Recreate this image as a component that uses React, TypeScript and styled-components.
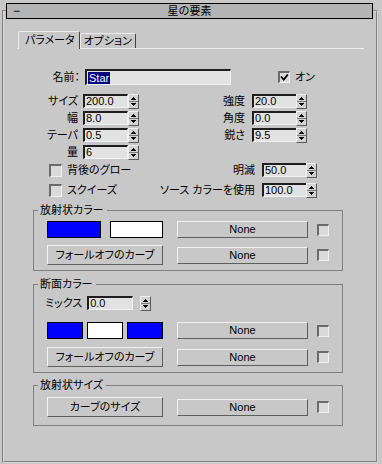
import React from "react";
import styled, { createGlobalStyle } from "styled-components";

const GlobalStyle = createGlobalStyle`
  * { box-sizing: border-box; }
  html, body { margin: 0; padding: 0; background: #c8c8c8; }
  body {
    width: 382px;
    height: 464px;
    overflow: hidden;
    font-family: "Liberation Sans", "Noto Sans CJK JP", sans-serif;
    font-size: 11px;
    color: #000;
    font-feature-settings: "palt";
  }
`;

const Rollout = styled.fieldset`
  margin: 3px 0 0 2px;
  padding: 0;
  width: 376px;
  height: 460px;
  min-width: 0;
  border: 2px groove #d6d6d6;
`;

const Header = styled.legend`
  margin-left: 2px;
  padding: 0;
  width: 367px;
  height: 16px;
  background: #b4b4b4;
  border: 1px solid #000;
`;

const HeaderInner = styled.div`
  display: grid;
  grid-template-columns: 1fr auto 1fr;
  align-items: center;
  height: 14px;
  line-height: 14px;
`;

const Collapse = styled.span`
  justify-self: start;
  padding-left: 6px;
  font-size: 12px;
`;

const Title = styled.span`
  font-size: 11px;
  font-feature-settings: normal;
`;

const Content = styled.div`
  display: flex;
  flex-direction: column;
  align-items: flex-start;
`;

const TabStrip = styled.div`
  display: flex;
  align-items: flex-end;
  margin: 12px 0 0 13px;
  width: 347px;
  height: 18px;
  padding-left: 1px;
  border-bottom: 1px solid #ececec;
`;

const Tab = styled.div<{ $active?: boolean }>`
  position: relative;
  height: ${(p) => (p.$active ? 18 : 15)}px;
  margin-bottom: ${(p) => (p.$active ? -1 : 0)}px;
  padding: ${(p) => (p.$active ? "1px 4px 0 6px" : "0 3px 0 3px")};
  background: #c8c8c8;
  border-style: solid;
  border-width: 1px 1px 0 1px;
  border-color: #ececec #404040 transparent #ececec;
  border-radius: 2px 2px 0 0;
  line-height: 14px;
  white-space: nowrap;
`;

const NameRow = styled.div`
  display: flex;
  align-items: center;
  margin-top: 20px;
  height: 16px;
`;

const NameLabel = styled.span`
  width: 76px;
  margin-right: 5px;
  text-align: right;
  line-height: 14px;
`;

const Sunken = styled.div<{ $w: number; $h: number }>`
  width: ${(p) => p.$w}px;
  height: ${(p) => p.$h}px;
  background: #e2e2e2;
  border-style: solid;
  border-width: 2px 1px 1px 2px;
  border-color: #1e1e1e #f2f2f2 #f2f2f2 #1e1e1e;
  font-size: 11px;
  line-height: ${(p) => p.$h - 3}px;
  padding-left: 1px;
  white-space: nowrap;
  overflow: hidden;
`;

const Selected = styled.span`
  display: inline-block;
  background: #000080;
  color: #fff;
  padding: 0 1px;
  line-height: 12px;
  margin-top: 1px;
`;

const CheckLabel = styled.label<{ $ml?: number }>`
  display: flex;
  align-items: center;
  gap: 5px;
  margin-left: ${(p) => p.$ml ?? 0}px;
  line-height: 14px;
  white-space: nowrap;
`;

const Box = styled.span<{ $size: number }>`
  display: inline-flex;
  align-items: center;
  justify-content: center;
  width: ${(p) => p.$size}px;
  height: ${(p) => p.$size}px;
  background: #dadada;
  border-style: solid;
  border-width: 2px 1px 1px 2px;
  border-color: #6a6a6a #f0f0f0 #f0f0f0 #6a6a6a;
  flex: none;
`;

const SpinBlock = styled.div<{ $mt: number }>`
  display: flex;
  margin-top: ${(p) => p.$mt}px;
`;

const SpinColumn = styled.div<{ $label: number; $g1: number; $g2: number; $rowGap: number; $ml?: number }>`
  display: grid;
  grid-template-columns: ${(p) => p.$label}px 45px 11px;
  grid-auto-rows: 14px;
  row-gap: ${(p) => p.$rowGap}px;
  align-items: center;
  margin-left: ${(p) => p.$ml ?? 0}px;
  & > :nth-child(3n + 2) { margin-left: ${(p) => p.$g1}px; }
  & > :nth-child(3n) { margin-left: ${(p) => p.$g2}px; }
`;

const CheckColumn = styled.div<{ $rowGap: number }>`
  display: grid;
  grid-auto-rows: 14px;
  row-gap: ${(p) => p.$rowGap}px;
  align-items: center;
  width: 140px;
  padding-left: 45px;
`;

const SpinLabel = styled.span`
  justify-self: end;
  line-height: 14px;
  white-space: nowrap;
`;

const SpinnerBox = styled.span`
  display: block;
  width: 11px;
  height: 15px;
  background: #d2d2d2;
  border-style: solid;
  border-width: 1px;
  border-color: #f0f0f0 #5a5a5a #5a5a5a #f0f0f0;
  align-self: center;
  & svg { display: block; }
`;

const Spinner = () => (
  <SpinnerBox>
    <svg width="9" height="13" viewBox="0 0 9 13" shapeRendering="crispEdges">
      <path d="M2 5h5v-1h-1v-1h-1v-1h-1v1h-1v1h-1z" fill="#000" />
      <rect x="0" y="6" width="9" height="1" fill="#7a7a7a" />
      <path d="M2 8h5v1h-1v1h-1v1h-1v-1h-1v-1h-1z" fill="#000" />
    </svg>
  </SpinnerBox>
);

const Group = styled.fieldset<{ $mt: number; $pt: number; $pb: number }>`
  margin: ${(p) => p.$mt}px 0 0 29px;
  width: 310px;
  min-width: 0;
  padding: ${(p) => p.$pt}px 12px ${(p) => p.$pb}px 13px;
  border: 1px solid #808080;
  display: flex;
  flex-direction: column;
`;

const GroupLegend = styled.legend`
  margin-left: -9px;
  padding: 0 3px 0 2px;
  line-height: 14px;
`;

const GroupRow = styled.div<{ $h: number; $mt?: number }>`
  display: flex;
  align-items: center;
  height: ${(p) => p.$h}px;
  margin-top: ${(p) => p.$mt ?? 0}px;
`;

const Swatches = styled.div<{ $gap: number }>`
  display: flex;
  gap: ${(p) => p.$gap}px;
  width: 116px;
  height: 17px;
`;

const Swatch = styled.span<{ $color: string }>`
  flex: 1;
  background: ${(p) => p.$color};
  border: 1px solid #000;
`;

const Raised = styled.button<{ $w: number; $h: number; $ml?: number }>`
  width: ${(p) => p.$w}px;
  height: ${(p) => p.$h}px;
  margin: 0 0 0 ${(p) => p.$ml ?? 0}px;
  padding: 0;
  background: #c8c8c8;
  border-style: solid;
  border-width: 1px;
  border-color: #f2f2f2 #5e5e5e #5e5e5e #f2f2f2;
  font-family: "Liberation Sans", "Noto Sans CJK JP", sans-serif;
  font-feature-settings: "palt";
  font-size: 11px;
  color: #000;
  line-height: ${(p) => p.$h - 2}px;
  white-space: nowrap;
`;

const GroupCheck = styled(Box)`
  margin-left: 9px;
`;

const MixLabel = styled.span`
  margin: 0 5px 0 -2px;
  line-height: 14px;
  white-space: nowrap;
`;

const MixSpinner = styled.span`
  margin-left: 7px;
  display: flex;
`;

const CheckMark = () => (
  <svg width="9" height="9" viewBox="0 0 9 9">
    <path d="M1 3.5l2.8 3 4-5" stroke="#000" strokeWidth="1.8" fill="none" />
  </svg>
);

export default function App() {
  return (
    <>
      <GlobalStyle />
      <Rollout>
        <Header>
          <HeaderInner>
            <Collapse>−</Collapse>
            <Title>星の要素</Title>
            <span />
          </HeaderInner>
        </Header>
        <Content>
          <TabStrip>
            <Tab $active>パラメータ</Tab>
            <Tab>オプション</Tab>
          </TabStrip>

          <NameRow>
            <NameLabel>名前：</NameLabel>
            <Sunken $w={146} $h={16}>
              <Selected>Star</Selected>
            </Sunken>
            <CheckLabel $ml={47}>
              <Box $size={12}>
                <CheckMark />
              </Box>
              オン
            </CheckLabel>
          </NameRow>

          <SpinBlock $mt={9}>
            <SpinColumn $label={74} $g1={5} $g2={5} $rowGap={3} $ml={0}>
              <SpinLabel>サイズ</SpinLabel>
              <Sunken $w={45} $h={14}>200.0</Sunken>
              <Spinner />
              <SpinLabel>幅</SpinLabel>
              <Sunken $w={45} $h={14}>8.0</Sunken>
              <Spinner />
              <SpinLabel>テーパ</SpinLabel>
              <Sunken $w={45} $h={14}>0.5</Sunken>
              <Spinner />
              <SpinLabel>量</SpinLabel>
              <Sunken $w={45} $h={14}>6</Sunken>
              <Spinner />
            </SpinColumn>
            <SpinColumn $label={100} $g1={7} $g2={6} $rowGap={3} $ml={11}>
              <SpinLabel>強度</SpinLabel>
              <Sunken $w={45} $h={14}>20.0</Sunken>
              <Spinner />
              <SpinLabel>角度</SpinLabel>
              <Sunken $w={45} $h={14}>0.0</Sunken>
              <Spinner />
              <SpinLabel>鋭さ</SpinLabel>
              <Sunken $w={45} $h={14}>9.5</Sunken>
              <Spinner />
            </SpinColumn>
          </SpinBlock>

          <SpinBlock $mt={4}>
            <CheckColumn $rowGap={6}>
              <CheckLabel>
                <Box $size={13} />
                背後のグロー
              </CheckLabel>
              <CheckLabel>
                <Box $size={13} />
                スクイーズ
              </CheckLabel>
            </CheckColumn>
            <SpinColumn $label={100} $g1={7} $g2={6} $rowGap={6} $ml={11}>
              <SpinLabel>明滅</SpinLabel>
              <Sunken $w={45} $h={14}>50.0</Sunken>
              <Spinner />
              <SpinLabel>ソース カラーを使用</SpinLabel>
              <Sunken $w={45} $h={14}>100.0</Sunken>
              <Spinner />
            </SpinColumn>
          </SpinBlock>

          <Group $mt={6} $pt={4} $pb={5}>
            <GroupLegend>放射状カラー</GroupLegend>
            <GroupRow $h={17}>
              <Swatches $gap={9}>
                <Swatch $color="#0000ff" />
                <Swatch $color="#ffffff" />
              </Swatches>
              <Raised $w={131} $h={17} $ml={14}>None</Raised>
              <GroupCheck $size={12} />
            </GroupRow>
            <GroupRow $h={20} $mt={7}>
              <Raised $w={116} $h={20}>フォールオフのカーブ</Raised>
              <Raised $w={131} $h={17} $ml={14}>None</Raised>
              <GroupCheck $size={12} />
            </GroupRow>
          </Group>

          <Group $mt={6} $pt={5} $pb={5}>
            <GroupLegend>断面カラー</GroupLegend>
            <GroupRow $h={14}>
              <MixLabel>ミックス</MixLabel>
              <Sunken $w={46} $h={14}>0.0</Sunken>
              <MixSpinner>
                <Spinner />
              </MixSpinner>
            </GroupRow>
            <GroupRow $h={17} $mt={12}>
              <Swatches $gap={4}>
                <Swatch $color="#0000ff" />
                <Swatch $color="#ffffff" />
                <Swatch $color="#0000ff" />
              </Swatches>
              <Raised $w={131} $h={17} $ml={14}>None</Raised>
              <GroupCheck $size={12} />
            </GroupRow>
            <GroupRow $h={20} $mt={8}>
              <Raised $w={116} $h={20}>フォールオフのカーブ</Raised>
              <Raised $w={131} $h={17} $ml={14}>None</Raised>
              <GroupCheck $size={12} />
            </GroupRow>
          </Group>

          <Group $mt={5} $pt={5} $pb={8}>
            <GroupLegend>放射状サイズ</GroupLegend>
            <GroupRow $h={20}>
              <Raised $w={116} $h={20}>カーブのサイズ</Raised>
              <Raised $w={131} $h={17} $ml={14}>None</Raised>
              <GroupCheck $size={12} />
            </GroupRow>
          </Group>
        </Content>
      </Rollout>
    </>
  );
}
